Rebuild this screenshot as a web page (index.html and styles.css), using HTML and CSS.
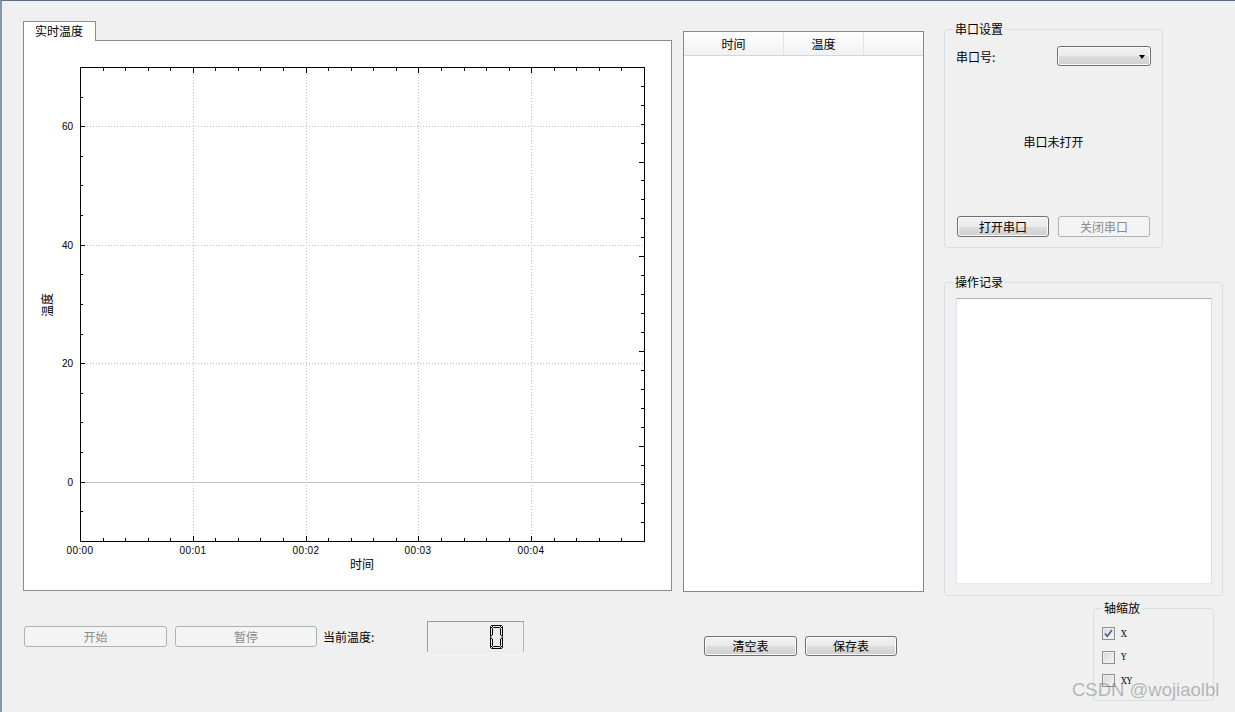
FILE: index.html
```html
<!DOCTYPE html>
<html lang="zh">
<head>
<meta charset="utf-8">
<title>温度监控</title>
<link rel="stylesheet" href="styles.css">
</head>
<body>
<div class="app">
  <div class="col-left">
    <div class="tabbar"><div class="tab">实时温度</div></div>
    <div class="tabpanel">
      <svg class="chart" width="647" height="549" viewBox="0 0 647 549">
        <path class="grid" d="M169.5 27V500M282.5 27V500M394.5 27V500M507.5 27V500M57 322.5H620M57 204.5H620M57 85.5H620"/>
        <path class="zero" d="M57 441.5H620"/>
        <path class="axis" d="M56.5 26V501M56 500.5H621M56 26.5H621M620.5 26V501"/>
        <path class="axis" d="M56 441.5h5M56 322.5h5M56 204.5h5M56 85.5h5
          M56 470.5h3M56 411.5h3M56 381.5h3M56 352.5h3M56 293.5h3M56 263.5h3M56 233.5h3M56 174.5h3M56 144.5h3M56 115.5h3M56 56.5h3
          M169.5 500v-5M282.5 500v-5M394.5 500v-5M507.5 500v-5
          M79.5 500v-3M101.5 500v-3M124.5 500v-3M146.5 500v-3M191.5 500v-3M214.5 500v-3M236.5 500v-3M259.5 500v-3M304.5 500v-3M327.5 500v-3M349.5 500v-3M372.5 500v-3M417.5 500v-3M440.5 500v-3M462.5 500v-3M485.5 500v-3M530.5 500v-3M552.5 500v-3M575.5 500v-3M597.5 500v-3
          M169.5 27v5M282.5 27v5M394.5 27v5M507.5 27v5
          M79.5 27v3M101.5 27v3M124.5 27v3M146.5 27v3M191.5 27v3M214.5 27v3M236.5 27v3M259.5 27v3M304.5 27v3M327.5 27v3M349.5 27v3M372.5 27v3M417.5 27v3M440.5 27v3M462.5 27v3M485.5 27v3M530.5 27v3M552.5 27v3M575.5 27v3M597.5 27v3
          M620 405.5h-5M620 310.5h-5M620 215.5h-5M620 121.5h-5
          M620 481.5h-3M620 462.5h-3M620 443.5h-3M620 424.5h-3M620 386.5h-3M620 367.5h-3M620 348.5h-3M620 329.5h-3M620 291.5h-3M620 272.5h-3M620 253.5h-3M620 234.5h-3M620 196.5h-3M620 177.5h-3M620 158.5h-3M620 139.5h-3M620 102.5h-3M620 83.5h-3M620 64.5h-3M620 45.5h-3"/>
        <g class="ticklbl ylbl">
          <text x="49" y="89">60</text>
          <text x="49" y="208">40</text>
          <text x="49" y="326">20</text>
          <text x="49" y="445">0</text>
        </g>
        <g class="ticklbl xlbl">
          <text x="56" y="513">00:00</text>
          <text x="169" y="513">00:01</text>
          <text x="282" y="513">00:02</text>
          <text x="394" y="513">00:03</text>
          <text x="507" y="513">00:04</text>
        </g>
        <text class="axtitle" x="338" y="528">时间</text>
        <text class="axtitle" transform="translate(22 264) rotate(-90)" dominant-baseline="central">温度</text>
      </svg>
    </div>
    <div class="ctrl-row">
      <button class="btn disabled w-start">开始</button>
      <button class="btn disabled w-pause">暂停</button>
      <span class="cur-label">当前温度:</span>
      <div class="lcd">
        <svg width="13" height="24" viewBox="0 0 13 24" class="digit">
          <path d="M1.5 0.5H11.5L9.5 2.5H3.5Z M0.5 1.5L2.5 3.5V10L0.5 11.5Z M12.5 1.5V11.5L10.5 10V3.5Z M0.5 12.5L2.5 14V20.5L0.5 22.5Z M12.5 12.5V22.5L10.5 20.5V14Z M1.5 23.5H11.5L9.5 21.5H3.5Z"/>
        </svg>
      </div>
    </div>
  </div>

  <div class="col-mid">
    <div class="table">
      <div class="thead">
        <div class="th c1">时间</div>
        <div class="th c2">温度</div>
        <div class="th c3"></div>
      </div>
    </div>
    <div class="tbl-btns">
      <button class="btn w-clear">清空表</button>
      <button class="btn w-save">保存表</button>
    </div>
  </div>

  <div class="col-right">
    <fieldset class="group g-serial">
      <legend>串口设置</legend>
      <div class="serial-body">
        <div class="port-row">
          <span>串口号:</span>
          <div class="combo"><span class="arrow"></span></div>
        </div>
        <div class="status">串口未打开</div>
        <div class="serial-btns">
          <button class="btn">打开串口</button>
          <button class="btn disabled">关闭串口</button>
        </div>
      </div>
    </fieldset>

    <fieldset class="group g-log">
      <legend>操作记录</legend>
      <div class="log-body"><div class="logbox"></div></div>
    </fieldset>

    <fieldset class="group g-axis">
      <legend>轴缩放</legend>
      <div class="axis-body">
        <div class="cb-row">
          <span class="cb checked">
            <svg width="11" height="11" viewBox="0 0 11 11"><path d="M2 5.5L4.3 8.3L9 2"/></svg>
          </span>
          <span class="cb-lbl">X</span>
        </div>
        <div class="cb-row"><span class="cb"></span><span class="cb-lbl">Y</span></div>
        <div class="cb-row"><span class="cb"></span><span class="cb-lbl">XY</span></div>
      </div>
    </fieldset>
  </div>
</div>
<div class="watermark">CSDN @wojiaolbl</div>
</body>
</html>
```

FILE: styles.css
```css
* { box-sizing: border-box; }
html, body { margin: 0; padding: 0; }
body {
  width: 1235px;
  height: 712px;
  overflow: hidden;
  position: relative;
  background: #f0f0f0;
  border-top: 1px solid #5f6f82;
  border-left: 2px solid #8797ab;
  font-family: "Noto Sans CJK SC", "Liberation Sans", sans-serif;
  font-size: 12px;
  color: #000;
}

.app {
  display: flex;
  align-items: flex-start;
  padding: 20px 0 0 21px;
}

/* ---------- left column ---------- */
.col-left {
  width: 649px;
  display: flex;
  flex-direction: column;
}
.tabbar {
  height: 19px;
  display: flex;
  position: relative;
  z-index: 1;
}
.tab {
  width: 73px;
  height: 20px;
  border: 1px solid #898c95;
  border-bottom: none;
  background: #fff;
  padding-left: 11px;
  line-height: 18px;
}
.tabpanel {
  height: 551px;
  border: 1px solid #898c95;
  background: #fff;
}
.chart { display: block; }
.chart .grid { fill: none; stroke: #c0c0c0; stroke-width: 1; stroke-dasharray: 1 2; }
.chart .zero { fill: none; stroke: #c0c0c0; stroke-width: 1; }
.chart .axis { fill: none; stroke: #000; stroke-width: 1; }
.chart .ticklbl { font-family: "Liberation Sans", sans-serif; font-size: 10px; fill: #000; }
.chart .ylbl { text-anchor: end; }
.chart .xlbl { text-anchor: middle; letter-spacing: 0.4px; }
.chart .axtitle {
  font-family: "Noto Sans CJK SC", sans-serif;
  font-size: 12px;
  fill: #000;
  text-anchor: middle;
}

.ctrl-row {
  display: flex;
  align-items: center;
  height: 31px;
  margin-top: 30px;
}

.btn {
  -webkit-appearance: none;
  appearance: none;
  margin: 0;
  padding: 0;
  height: 21px;
  font-family: "Noto Sans CJK SC", sans-serif;
  font-size: 12px;
  line-height: 19px;
  color: #000;
  text-align: center;
  border: 1px solid #707070;
  border-radius: 3px;
  background: linear-gradient(#f2f2f2, #ebebeb 50%, #dddddd 50%, #cfcfcf);
  box-shadow: inset 0 0 0 1px #fbfbfb;
}
.btn.disabled {
  border-color: #adb2b5;
  background: #f4f4f4;
  color: #8a8a8a;
  box-shadow: none;
}
.w-start { width: 143px; margin-left: 1px; }
.w-pause { width: 142px; margin-left: 8px; }
.cur-label { width: 104px; margin-left: 6px; }
.lcd {
  width: 97px;
  height: 31px;
  border: 1px solid;
  border-color: #9c9c9c #b4b4b4 #e8e8e8 #9c9c9c;
  display: flex;
  justify-content: flex-end;
  padding: 3px 20px 0 0;
}
.digit { display: block; }
.digit path { fill: none; stroke: #000; stroke-width: 1; }

/* ---------- middle column ---------- */
.col-mid {
  width: 241px;
  margin-left: 11px;
  margin-top: 10px;
}
.table {
  height: 561px;
  border: 1px solid #828790;
  background: #fff;
}
.thead {
  display: flex;
  height: 24px;
  border-bottom: 1px solid #d5d5d5;
  background: linear-gradient(#ffffff, #f0f1f3);
}
.th {
  line-height: 23px;
  text-align: center;
  border-right: 1px solid #e2e3e5;
}
.th.c1 { width: 100px; }
.th.c2 { width: 80px; }
.th.c3 { flex: 1; border-right: none; }
.tbl-btns {
  display: flex;
  gap: 8px;
  margin-top: 44px;
  padding-left: 21px;
}
.tbl-btns .btn { height: 20px; line-height: 18px; }
.w-clear { width: 93px; }
.w-save { width: 92px; }

/* ---------- right column ---------- */
.col-right {
  width: 279px;
  margin-left: 20px;
  display: flex;
  flex-direction: column;
  align-items: flex-start;
}
.group {
  margin: 0;
  padding: 0;
  min-width: 0;
  border: 1px solid #d5dfe5;
  border-radius: 3px;
}
.group legend {
  margin-left: 8px;
  padding: 0 2px;
  line-height: 16px;
  height: 16px;
}
.g-serial { width: 219px; height: 227px; }
.serial-body {
  height: 210px;
  display: flex;
  flex-direction: column;
  padding: 0 11px 10px 11px;
}
.port-row {
  display: flex;
  align-items: center;
  justify-content: space-between;
  margin-top: 9px;
  height: 20px;
}
.combo {
  width: 94px;
  height: 20px;
  border: 1px solid #707070;
  border-radius: 3px;
  background: linear-gradient(#f2f2f2, #ebebeb 50%, #dddddd 50%, #cfcfcf);
  box-shadow: inset 0 0 0 1px #fbfbfb;
  display: flex;
  align-items: center;
  justify-content: flex-end;
  padding-right: 5px;
}
.arrow {
  width: 0;
  height: 0;
  border-left: 3.5px solid transparent;
  border-right: 3.5px solid transparent;
  border-top: 4px solid #000;
  margin-top: 1px;
}
.status {
  flex: 1;
  display: flex;
  align-items: center;
  justify-content: center;
}
.serial-btns {
  display: flex;
  gap: 9px;
  padding: 0 1px;
}
.serial-btns .btn { flex: 1; }

.g-log { width: 279px; height: 322px; margin-top: 26px; }
.log-body {
  height: 305px;
  padding: 8px 10px 11px 11px;
  display: flex;
}
.logbox {
  flex: 1;
  background: #fff;
  border: 1px solid;
  border-color: #abadb3 #dbdfe6 #e3e9ef #e2e3ea;
}

.g-axis { width: 121px; height: 101px; margin-top: 4px; margin-left: 149px; }
.axis-body {
  padding: 11px 0 0 8px;
  display: flex;
  flex-direction: column;
  gap: 10.5px;
}
.cb-row {
  display: flex;
  align-items: center;
  height: 13px;
}
.cb {
  width: 13px;
  height: 13px;
  border: 1px solid #8e8f8f;
  background: linear-gradient(135deg, #d6d8dc, #f6f6f6);
  box-shadow: inset 0 0 0 1px #f0f0f0;
  display: flex;
  align-items: center;
  justify-content: center;
}
.cb svg { display: block; }
.cb svg path { fill: none; stroke: #4a5a8e; stroke-width: 1.6; }
.cb-lbl {
  margin-left: 6px;
  font-family: "DejaVu Serif Condensed", "DejaVu Serif", serif;
  font-size: 9px;
}

.watermark {
  position: absolute;
  left: 1070px;
  top: 678px;
  font-family: "Liberation Sans", sans-serif;
  font-size: 18.5px;
  line-height: 21px;
  color: rgba(120, 120, 120, 0.5);
  white-space: nowrap;
}
```
